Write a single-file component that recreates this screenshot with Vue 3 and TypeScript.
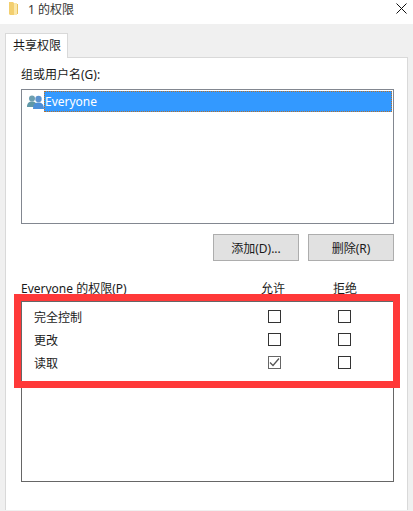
<template>
  <div class="dialog">
    <div class="title-bar">
      <svg class="folder" width="10" height="14" viewBox="0 0 10 14">
        <path d="M0 0h4l1 1v12H1l-1-1z" fill="#f3cf6f" />
        <path d="M5 1h3v12H5z" fill="#fbe7a8" />
        <path d="M8 2h1v10H8z" fill="#e8c25f" />
      </svg>
      <span class="title">1 的权限</span>
      <svg class="close" width="11" height="11" viewBox="0 0 11 11">
        <path d="M0.5 0.5l10 10M10.5 0.5l-10 10" stroke="#111" stroke-width="1" fill="none" />
      </svg>
    </div>

    <div class="body">
      <div class="tabs">
        <div class="tab">共享权限</div>
      </div>
      <div class="panel">
        <div class="label group-label">组或用户名(G):</div>
        <div class="user-list">
          <div class="user-row">
            <svg class="user-icon" width="17" height="16" viewBox="0 0 17 16">
              <circle cx="5" cy="4.500" r="3" fill="#6d9fb0" />
              <path d="M0 13c0-4 2-5.500 5-5.500s5 1.500 5 5.500z" fill="#5f98a8" />
              <circle cx="11.500" cy="5" r="3.200" fill="#5c93cf" />
              <path d="M6 15c0-5 2.500-6.500 5.500-6.500s5.500 1.500 5.500 6.500z" fill="#4d8fd8" />
            </svg>
            <span class="user-name">Everyone</span>
          </div>
        </div>
        <div class="actions">
          <button class="btn">添加(D)...</button>
          <button class="btn">删除(R)</button>
        </div>
        <div class="perm-head">
          <span class="perm-title">Everyone 的权限(P)</span>
          <span class="perm-col allow-col">允许</span>
          <span class="perm-col">拒绝</span>
        </div>
        <div class="perm-box">
          <div v-for="row in rows" :key="row.name" class="perm-row">
            <span class="perm-name">{{ row.name }}</span>
            <span class="perm-col">
              <span class="check" :class="{ checked: row.allow }">
                <svg v-if="row.allow" width="11" height="11" viewBox="0 0 11 11">
                  <path d="M1 5.500l3 3 6-7" stroke="#555" stroke-width="1.300" fill="none" />
                </svg>
              </span>
            </span>
            <span class="perm-col"><span class="check"></span></span>
          </div>
        </div>
        <div class="highlight"></div>
      </div>
    </div>
  </div>
</template>

<script setup lang="ts">
const rows = [
  { name: '完全控制', allow: false },
  { name: '更改', allow: false },
  { name: '读取', allow: true }
]
</script>

<style scoped>
.dialog {
  display: flex;
  flex-direction: column;
  width: 413px;
  height: 511px;
  overflow: hidden;
  background: #f0f0f0;
  color: #1a1a1a;
  font-family: "Noto Sans", "Noto Sans CJK SC", sans-serif;
  font-size: 12px;
}

.title-bar {
  display: flex;
  align-items: center;
  height: 24px;
  padding: 0 6px 7px 9px;
  box-sizing: border-box;
  background: #fff;
}

.title {
  margin-left: 9px;
  font-size: 12px;
  color: #333;
}

.close {
  margin-left: auto;
}

.body {
  flex: 1;
  padding: 9px 5px 0;
  min-height: 0;
}

.tabs {
  display: flex;
  height: 25px;
}

.tab {
  position: relative;
  z-index: 1;
  width: 63px;
  height: 25px;
  box-sizing: border-box;
  padding-top: 2px;
  padding-left: 7px;
  background: #fff;
  border: 1px solid #d9d9d9;
  border-bottom: none;
}

.panel {
  position: relative;
  height: 453px;
  box-sizing: border-box;
  margin-top: -1px;
  padding: 9px 13px 0 15px;
  background: #fff;
  border: 1px solid #d9d9d9;
  border-bottom: none;
}

.label {
  line-height: 16px;
}

.user-list {
  height: 135px;
  margin-top: 6px;
  padding: 1px 1px 0 0;
  box-sizing: border-box;
  border: 1px solid #828790;
}

.user-row {
  display: flex;
  align-items: center;
  height: 21px;
}

.user-icon {
  margin-left: 5px;
  flex: none;
}

.user-name {
  flex: 1;
  height: 21px;
  line-height: 22px;
  padding-left: 1px;
  box-sizing: border-box;
  background: #3399ff;
  color: #fff;
  outline: 1px dotted #b5702c;
  outline-offset: -1px;
}

.actions {
  display: flex;
  justify-content: flex-end;
  gap: 9px;
  margin-top: 10px;
}

.btn {
  width: 86px;
  height: 27px;
  padding: 0;
  background: #e1e1e1;
  border: 1px solid #adadad;
  font: inherit;
  color: #1a1a1a;
}

.perm-head {
  display: flex;
  align-items: center;
  height: 16px;
  margin-top: 19px;
  padding-right: 14px;
}

.perm-title {
  flex: 1;
}

.perm-col {
  display: flex;
  justify-content: center;
  width: 70px;
  flex: none;
}

.allow-col {
  margin-right: 2px;
  margin-left: -2px;
}

.perm-box {
  height: 181px;
  margin-top: 5px;
  padding: 3px 14px 0 0;
  box-sizing: border-box;
  border: 1px solid #666;
}

.perm-row {
  display: flex;
  align-items: center;
  height: 23px;
  padding-left: 12px;
}

.perm-name {
  flex: 1;
}

.check {
  display: flex;
  align-items: center;
  justify-content: center;
  width: 13px;
  height: 13px;
  box-sizing: border-box;
  border: 1px solid #333;
}

.check.checked {
  border-color: #666;
}

.highlight {
  position: absolute;
  left: 8px;
  top: 236px;
  width: 386px;
  height: 94px;
  box-sizing: border-box;
  border: 7px solid #ff3939;
}
</style>
